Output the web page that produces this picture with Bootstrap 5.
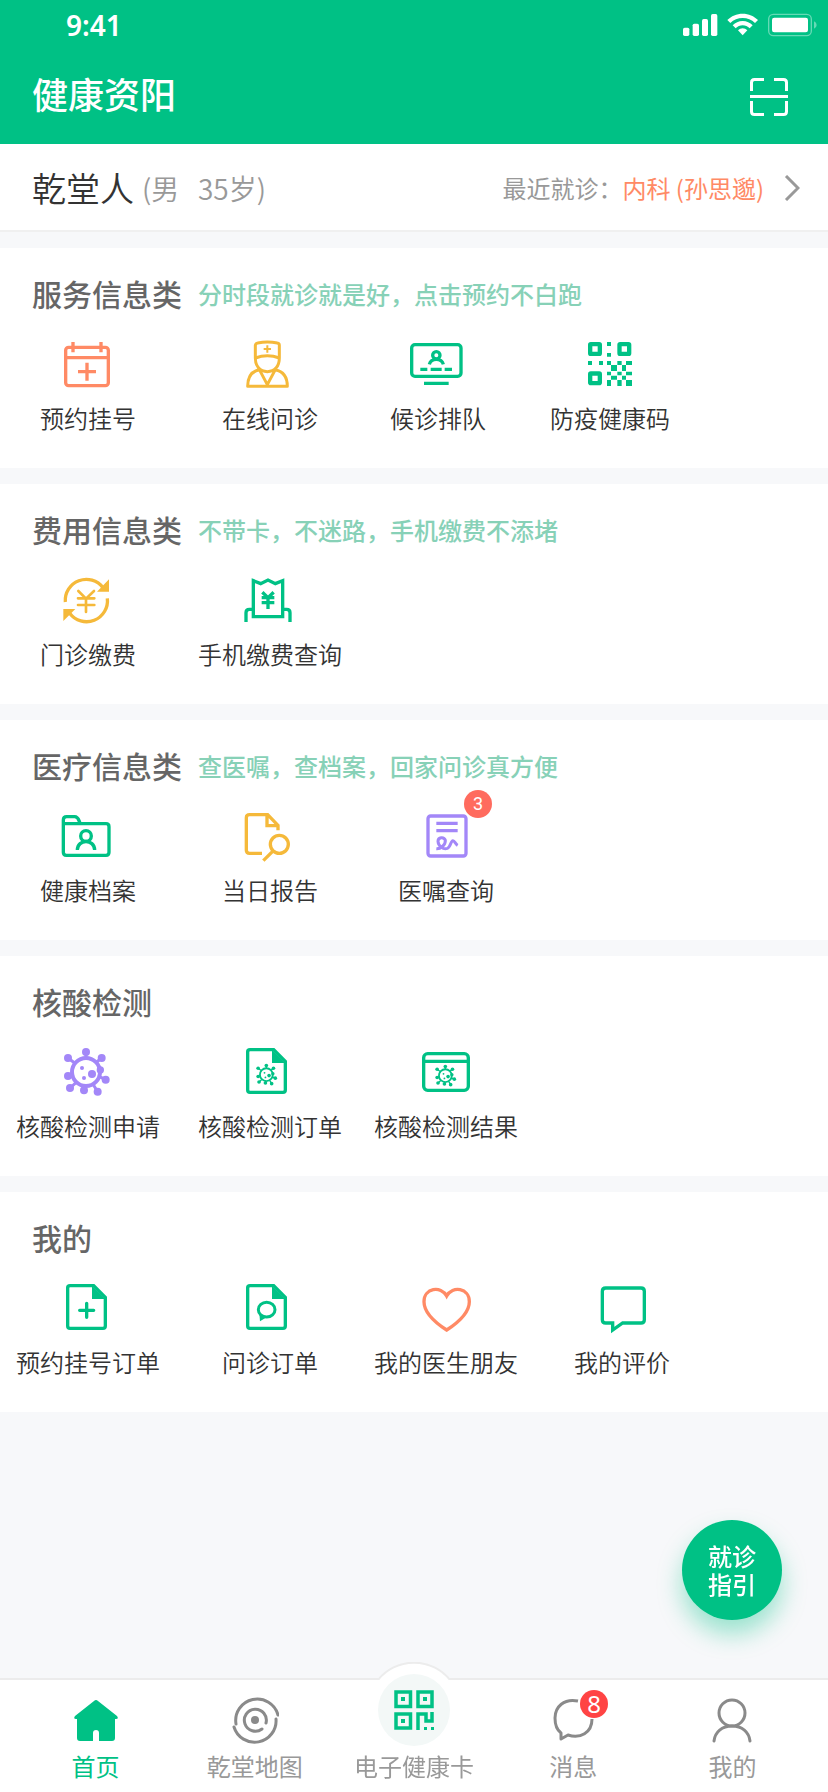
<!DOCTYPE html>
<html lang="zh-CN">
<head>
<meta charset="utf-8">
<meta name="viewport" content="width=device-width, initial-scale=1">
<title>健康资阳</title>
<link rel="stylesheet" href="https://cdn.jsdelivr.net/npm/bootstrap@5.3.0/dist/css/bootstrap.min.css">
<style>
:root{--green:#00c185;--orange:#ff8a65;--gold:#f5b93a;--violet:#a387f8;--ink:#333;--muted:#999}
body{font-family:"Noto Sans CJK SC",sans-serif;background:#f7f8fa;color:var(--ink);font-size:24px;line-height:32px;padding-bottom:114px}
a{color:inherit;text-decoration:none}
svg{display:block;fill:none;stroke:currentColor}
.solid{fill:currentColor;stroke:none}
.c-green{color:var(--green)}.c-orange{color:var(--orange)}.c-gold{color:var(--gold)}.c-violet{color:var(--violet)}.c-muted{color:var(--muted)}
.app-top{background:var(--green);color:#fff}
.status-bar{height:50px;padding:0 10px 0 66px}
.clock{font:600 28px/32px "Noto Sans",sans-serif}
.title-bar{height:94px;padding:0 32px}
.title-bar h1{font-size:36px;line-height:44px;font-weight:500}
.title-bar button{color:#fff}
.patient{height:88px;padding:2px 28px 0 32px;border-bottom:2px solid #f0f0f0}
.patient-name{font-size:34px;line-height:44px;font-weight:350}
.patient-info{font-size:28px;font-weight:350;white-space:pre}
.chevron{margin-left:20px}
.block{padding:25px 0 34px;margin-top:16px}
.block-head{padding:0 32px;margin-bottom:23px}
.block-head h2{font-size:30px;line-height:40px;font-weight:500;color:#666}
.block-head p{color:#87d1b7;line-height:38px;font-weight:500}
.tiles{display:grid;grid-template-columns:182fr 176fr 176fr 176fr 118fr}
.tiles-service{grid-template-columns:182fr 176fr 160fr 184fr 126fr}
.tile{gap:10px;white-space:nowrap;font-weight:350}
.tile:first-child{padding-right:6px}
.tile svg{width:56px;height:56px;stroke-width:10}
.dot-badge{width:28px;height:28px;border-radius:50%;color:#fff;line-height:28px;text-align:center;font-weight:400}
.tile .dot-badge{left:46px;top:-18px;background:#ff6b5e;font-family:Roboto,sans-serif;font-size:18px}
.guide{right:46px;bottom:172px;width:100px;height:100px;background:var(--green);color:#fff;font-weight:500;line-height:28px;box-shadow:0 14px 24px rgba(0,193,133,.38)}
.tabs{background:#fff;border-top:2px solid #ececec;padding:16px 16px 12px}
.tab{flex:1 1 0;gap:8px;line-height:28px;color:var(--muted);white-space:nowrap}
.tab svg{width:48px;height:48px;stroke:#8a8a8a;stroke-width:3}
.tab.current{color:var(--green)}
.tab.current svg{stroke:none;fill:var(--green)}
.tab .dot-badge{left:31px;top:-6px;background:#ff4444;font-family:"Noto Sans",sans-serif;font-size:24px}
.tabs .hump{width:76px;height:18px;top:-18px;fill:#fff;stroke:#ececec;stroke-width:2}
.card-disc{width:72px;height:72px;top:-22px;background:#f3f8f7}
.tab .card-disc svg{width:40px;height:40px;stroke:var(--green)}
.disc-space{height:48px}
</style>
</head>
<body>
<svg width="0" height="0" class="position-absolute" aria-hidden="true">
  <defs>
    <g id="virus">
      <circle r="42" stroke-width="12"/>
      <path stroke-width="9" d="M0-60V-44M-54-42-34-27M47-42 32-30M-54 12-42 8M-48 48-30 32M-6 55V42M35 59 22 38M59 23 40 14"/>
      <g class="solid"><circle cy="-60" r="12"/><circle cx="-54" cy="-42" r="12"/><circle cx="47" cy="-42" r="12"/><circle cx="-54" cy="12" r="12"/><circle cx="-48" cy="48" r="12"/><circle cx="-6" cy="55" r="12"/><circle cx="35" cy="59" r="12"/><circle cx="59" cy="23" r="12"/><circle cx="43" cy="-6" r="11"/><circle cx="-12" cy="-12" r="6"/><circle cx="18" cy="6" r="12"/><circle cx="-6" cy="18" r="6"/></g>
    </g>
    <g id="sheet">
      <path d="M24 17H95L130 52V138q0 7-7 7H24q-7 0-7-7V23q0-6 7-6Z"/>
      <path class="solid" d="M90 17V57H130Z"/>
    </g>
  </defs>
</svg>

<header class="app-top">
  <div class="status-bar d-flex justify-content-between align-items-center">
    <span class="clock">9:41</span>
    <svg width="135" height="24" viewBox="807 39 405 72" role="img" aria-label="信号、无线网络、电量">
      <g class="solid"><rect x="807" y="83" width="19" height="25" rx="5"/><rect x="836" y="71" width="19" height="37" rx="5"/><rect x="864" y="57" width="18" height="51" rx="5"/><rect x="891" y="42" width="19" height="66" rx="5"/>
      <path d="M986 41c18 0 34 7 46 19l-9 9c-10-10-23-15-37-15s-27 5-37 15l-9-9c12-12 28-19 46-19Z"/><path d="M986 63c12 0 22 5 30 13l-9 9c-6-6-13-9-21-9s-15 3-21 9l-9-9c8-8 18-13 30-13Z"/><path d="M986 85c5 0 10 2 14 6l-14 15-14-15c4-4 9-6 14-6Z"/>
      <rect x="1074" y="53" width="108" height="44" rx="7"/><path opacity=".4" d="M1200 64q8 3 8 11t-8 11Z"/></g>
      <rect opacity=".4" x="1064" y="43" width="128" height="64" rx="14" stroke-width="4"/>
    </svg>
  </div>
  <div class="title-bar d-flex justify-content-between align-items-center">
    <h1 class="mb-2">健康资阳</h1>
    <button type="button" class="btn p-2 border-0" aria-label="扫一扫">
      <svg width="38" height="38" viewBox="0 0 38 38" stroke-width="3"><path d="M1.500 13V4.500q0-3 3-3H14M24 1.500h9.500q3 0 3 3V13M36.500 23v10.500q0 3-3 3H24M14 36.500H4.500q-3 0-3-3V23M0 18.500H38"/></svg>
    </button>
  </div>
</header>

<main>
  <a href="#patient" class="patient bg-white d-flex align-items-center">
    <span class="patient-name me-2">乾堂人</span>
    <span class="patient-info c-muted">(男   35岁)</span>
    <span class="ms-auto c-muted">最近就诊：</span>
    <span class="c-orange">内科 (孙思邈)</span>
    <svg class="chevron c-muted" width="16" height="26" viewBox="0 0 16 26" stroke-width="3"><path d="M2 1 14 13 2 25"/></svg>
  </a>

  <section class="block bg-white">
    <div class="block-head d-flex align-items-end gap-3"><h2 class="mb-0">服务信息类</h2><p class="mb-0">分时段就诊就是好，点击预约不白跑</p></div>
    <div class="tiles tiles-service">
      <a href="#register" class="tile d-flex flex-column align-items-center">
        <svg class="c-orange" viewBox="180 288 168 168"><rect x="197" y="322" width="128" height="115" rx="9"/><path d="M197 353H325M219 306V337M303 306V337M234 395H288M261 368V422"/></svg>
        <span>预约挂号</span></a>
      <a href="#consult" class="tile d-flex flex-column align-items-center">
        <svg class="c-gold" viewBox="726 288 168 168"><path stroke-width="9" stroke-linejoin="round" d="M766 316Q767 310 773 309 802 303 832 309 838 310 838 316V354C838 378 825 395 802 395S766 378 766 354ZM766 354Q802 340 838 354M778 389C755 394 743 412 743 439H862C862 412 850 394 826 389M778 389 802 434 826 389"/><path stroke-width="6" d="M791 327H813M802 316V338"/></svg>
        <span>在线问诊</span></a>
      <a href="#queue" class="tile d-flex flex-column align-items-center">
        <svg class="c-green" viewBox="210 288 168 168"><rect x="215" y="314" width="148" height="95" rx="10"/><path d="M252 430H326M241 388H262M272 388H305M314 388H336"/><circle cx="289" cy="346" r="11"/><path d="M268 373C271 362 278 358 289 358S307 362 310 373"/></svg>
        <span>候诊排队</span></a>
      <a href="#code" class="tile d-flex flex-column align-items-center">
        <svg class="c-green" viewBox="726 288 168 168"><g stroke-width="13"><rect x="750.500" y="312.500" width="29" height="29" rx="2"/><rect x="838.500" y="312.500" width="29" height="29" rx="2"/><rect x="750.500" y="400.500" width="29" height="29" rx="2"/></g><path class="solid" d="M801 306h12v12h-12zM801 339h12v11h-12zM744 363h12v12h-12zM777 363h12v12h-12zM801 363h12v12h-12zM832 363h13v12h-13zM858 363h18v12h-18zM813 375h18v18h-18zM846 375h12v18h-12zM801 395h12v11h-12zM832 395h13v11h-13zM858 395h18v11h-18zM813 407h18v12h-18zM846 407h12v12h-12zM801 420h12v18h-12zM832 420h13v18h-13zM858 420h18v18h-18z"/></svg>
        <span>防疫健康码</span></a>
    </div>
  </section>

  <section class="block bg-white">
    <div class="block-head d-flex align-items-end gap-3"><h2 class="mb-0">费用信息类</h2><p class="mb-0">不带卡，不迷路，手机缴费不添堵</p></div>
    <div class="tiles">
      <a href="#pay" class="tile d-flex flex-column align-items-center">
        <svg class="c-gold" viewBox="180 216 168 168"><path d="M196 306A63 63 0 0 1 309 263M322 295A63 63 0 0 1 209 340"/><path class="solid" d="M327 238V275H291ZM190 327H226L190 363Z"/><path stroke-width="8" stroke-linecap="round" d="M235 273 258 296 282 273M234 295H283M234 315H283M258 296V336"/></svg>
        <span>门诊缴费</span></a>
      <a href="#bills" class="tile d-flex flex-column align-items-center">
        <svg class="c-green" viewBox="726 216 168 168"><path d="M760 242 782 251 804 240 826 251 848 242V350H760ZM738 366V338Q738 328 748 328H760M848 328H860Q870 328 870 338V366M787 277 804 293 821 277M785 293H823M785 308H823M804 293V327"/></svg>
        <span>手机缴费查询</span></a>
    </div>
  </section>

  <section class="block bg-white">
    <div class="block-head d-flex align-items-end gap-3"><h2 class="mb-0">医疗信息类</h2><p class="mb-0">查医嘱，查档案，回家问诊真方便</p></div>
    <div class="tiles">
      <a href="#records" class="tile d-flex flex-column align-items-center">
        <svg class="c-green" viewBox="180 234 168 168"><path d="M190 281V270Q190 260 200 260H224C236 260 236 272 241 281H318Q327 281 327 290V367Q327 376 318 376H199Q190 376 190 367ZM190 281H241"/><circle cx="258" cy="318" r="16"/><path d="M232 360C233 326 283 326 284 360"/></svg>
        <span>健康档案</span></a>
      <a href="#report" class="tile d-flex flex-column align-items-center">
        <svg class="c-gold" viewBox="726 234 168 168"><path d="M786 370H749Q739 370 739 361V263Q739 254 749 254H803L834 286V301M801 254V287H836"/><circle cx="838" cy="343" r="27"/><path d="M818 364 790 392"/></svg>
        <span>当日报告</span></a>
      <a href="#orders" class="tile d-flex flex-column align-items-center">
        <div class="position-relative">
          <svg class="c-violet" viewBox="234 144 168 168"><rect x="264" y="168" width="114" height="120" rx="8"/><path d="M289 190H353M289 212H353"/><path stroke-width="9" d="M289 266C301 267 317 256 316 241 312 229 294 231 294 244 295 258 309 269 322 265 333 261 331 243 339 242 344 242 346 252 353 256"/></svg>
          <span class="dot-badge position-absolute">3</span>
        </div>
        <span>医嘱查询</span></a>
    </div>
  </section>

  <section class="block bg-white">
    <div class="block-head"><h2 class="mb-0">核酸检测</h2></div>
    <div class="tiles">
      <a href="#test-apply" class="tile d-flex flex-column align-items-center">
        <svg class="c-violet" viewBox="0 0 168 168"><use href="#virus" transform="translate(78 84)"/></svg>
        <span>核酸检测申请</span></a>
      <a href="#test-orders" class="tile d-flex flex-column align-items-center">
        <svg class="c-green" viewBox="0 0 168 168"><use href="#sheet"/><use href="#virus" transform="translate(73 92) scale(.456)"/></svg>
        <span>核酸检测订单</span></a>
      <a href="#test-results" class="tile d-flex flex-column align-items-center">
        <svg class="c-green" viewBox="234 72 168 168"><rect x="251" y="101" width="134" height="110" rx="12"/><path d="M251 124H385"/><use href="#virus" transform="translate(316 167) scale(.456)"/></svg>
        <span>核酸检测结果</span></a>
    </div>
  </section>

  <section class="block bg-white">
    <div class="block-head"><h2 class="mb-0">我的</h2></div>
    <div class="tiles">
      <a href="#my-bookings" class="tile d-flex flex-column align-items-center">
        <svg class="c-green" viewBox="0 0 168 168"><use href="#sheet" x="6"/><path stroke-linecap="round" d="M59 91H101M80 70V112"/></svg>
        <span>预约挂号订单</span></a>
      <a href="#my-consults" class="tile d-flex flex-column align-items-center">
        <svg class="c-green" viewBox="0 0 168 168"><use href="#sheet"/><ellipse cx="74" cy="89" rx="25" ry="22" stroke-width="9"/><path class="solid" d="M52 100 54 124 70 114Z"/></svg>
        <span>问诊订单</span></a>
      <a href="#my-doctors" class="tile d-flex flex-column align-items-center">
        <svg class="c-orange" viewBox="174 210 168 168"><path d="M260 360C220 334 192 305 192 275 192 234 243 226 260 258 277 226 328 234 328 275 328 305 300 334 260 360Z"/></svg>
        <span>我的医生朋友</span></a>
      <a href="#my-reviews" class="tile d-flex flex-column align-items-center">
        <svg class="c-green" viewBox="702 210 168 168"><path d="M737 234H843Q853 234 853 244V329Q853 339 843 339H788L758 360V339H737Q727 339 727 329V244Q727 234 737 234Z"/></svg>
        <span>我的评价</span></a>
    </div>
  </section>
</main>

<button type="button" class="guide position-fixed rounded-circle border-0 p-0">就诊<br>指引</button>

<nav class="tabs fixed-bottom d-flex">
  <svg class="hump position-absolute start-50 translate-middle-x" viewBox="0 0 76 18"><path d="M2 18A46 46 0 0 1 74 18"/></svg>
  <a href="#home" class="tab current d-flex flex-column align-items-center" aria-current="page">
    <svg viewBox="0 0 48 48"><path d="M22 5Q24 3 26 5L45 20Q47 23 44 23H43V42Q43 45 40 45H27V37Q27 34 24 34T21 37V45H8Q5 45 5 42V23H4Q1 23 3 20Z"/></svg>
    <span>首页</span></a>
  <a href="#map" class="tab d-flex flex-column align-items-center">
    <svg viewBox="0 0 48 48"><g stroke-linecap="round"><path d="M5 28A21.500 21.500 0 0 1 47 19M3 31A21.500 21.500 0 0 0 45 23M35 27A11 11 0 1 0 31 33"/></g><circle cx="24" cy="24" r="4" style="fill:#8a8a8a;stroke:none"/></svg>
    <span>乾堂地图</span></a>
  <a href="#card" class="tab position-relative d-flex flex-column align-items-center">
    <span class="disc-space"></span>
    <span class="card-disc position-absolute start-50 translate-middle-x rounded-circle d-flex justify-content-center">
      <svg class="mt-3" viewBox="0 0 40 40"><path d="M2 2H16.500V16.500H2ZM24 2H38V16.500H24ZM2 24H16.500V38H2ZM24 40V24H32V31H38V22" stroke-width="3.500"/><path style="fill:var(--green);stroke:none" d="M7 7h4v4H7zM29 7h4v4h-4zM7 29h4v4H7zM30 37h3v3h-3zM37 37h3v3h-3z"/></svg>
    </span>
    <span>电子健康卡</span></a>
  <a href="#messages" class="tab d-flex flex-column align-items-center">
    <div class="position-relative">
      <svg viewBox="0 0 48 48"><path stroke-linejoin="round" d="M29 5C15 2 6 11 6 22 6 29 8 34 12 37V43L19 39C31 43 43 37 43 23"/></svg>
      <span class="dot-badge position-absolute">8</span>
    </div>
    <span>消息</span></a>
  <a href="#me" class="tab d-flex flex-column align-items-center">
    <svg viewBox="0 0 48 48"><circle cx="24" cy="17" r="13"/><path stroke-linecap="round" d="M6 45C7 36 14 30 24 30S41 36 42 45"/></svg>
    <span>我的</span></a>
</nav>
<script src="https://cdn.jsdelivr.net/npm/bootstrap@5.3.0/dist/js/bootstrap.bundle.min.js"></script>
</body>
</html>
